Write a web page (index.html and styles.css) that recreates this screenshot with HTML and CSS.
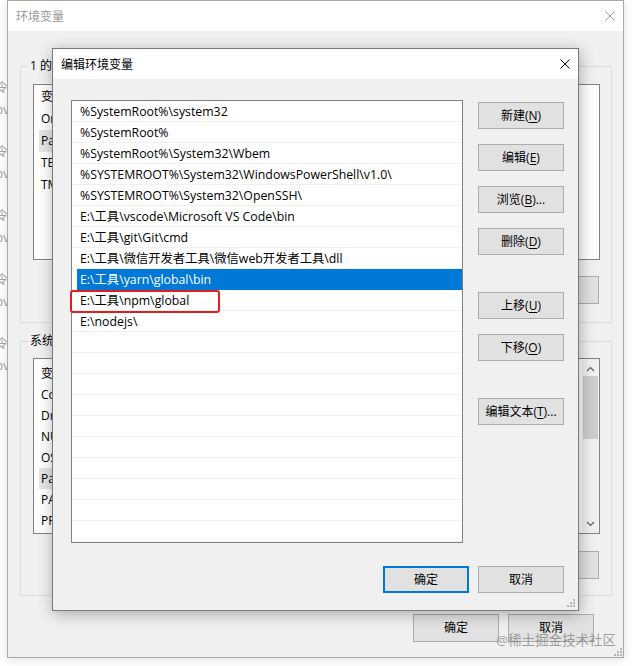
FILE: index.html
```html
<!DOCTYPE html>
<html lang="zh-CN">
<head>
<meta charset="utf-8">
<title>编辑环境变量</title>
<link rel="stylesheet" href="styles.css">
</head>
<body>
  <div class="peek">
    <div class="peek-item"><span>令</span><span>ov</span></div>
    <div class="peek-item"><span>令</span><span>ov</span></div>
    <div class="peek-item"><span>令</span><span>ov</span></div>
    <div class="peek-item"><span>令</span><span>ov</span></div>
    <div class="peek-item"><span>令</span><span>ov</span></div>
  </div>

  <div class="win back">
    <div class="titlebar">
      <span class="title">环境变量</span>
      <svg class="close" width="10" height="10" viewBox="0 0 10 10"><path d="M0.5 0.5L9.5 9.5M9.5 0.5L0.5 9.5" stroke="currentColor" stroke-width="1" fill="none"/></svg>
    </div>
    <div class="back-body">
      <fieldset class="group g1">
        <legend>1 的用户变量(U)</legend>
        <div class="blist l1">
          <div class="brow">变量</div>
          <div class="brow">OneDrive</div>
          <div class="brow sel">Path</div>
          <div class="brow">TEMP</div>
          <div class="brow">TMP</div>
        </div>
        <div class="gbtns"><button class="btn bbtn">删除(D)</button></div>
      </fieldset>
      <fieldset class="group g2">
        <legend>系统变量(S)</legend>
        <div class="blist l2">
          <div class="brow">变量</div>
          <div class="brow">ComSpec</div>
          <div class="brow">DriverData</div>
          <div class="brow">NUMBER_OF_PROCESSORS</div>
          <div class="brow">OS</div>
          <div class="brow sel">Path</div>
          <div class="brow">PATHEXT</div>
          <div class="brow">PROCESSOR_ARCHITECTURE</div>
          <div class="vscroll">
            <svg class="arrow" width="9" height="6" viewBox="0 0 9 6"><path d="M1 5L4.5 1.5L8 5" stroke="#606060" stroke-width="1.2" fill="none"/></svg>
            <div class="thumb"></div>
            <div class="track"></div>
            <svg class="arrow" width="9" height="6" viewBox="0 0 9 6"><path d="M1 1L4.5 4.5L8 1" stroke="#606060" stroke-width="1.2" fill="none"/></svg>
          </div>
        </div>
        <div class="gbtns"><button class="btn bbtn">删除(L)</button></div>
      </fieldset>
      <div class="back-foot">
        <button class="btn bbtn">确定</button>
        <button class="btn bbtn">取消</button>
      </div>
    </div>
    <svg class="grip back-grip" width="9" height="9" viewBox="0 0 9 9"><g fill="#b5b5b5"><rect x="7" y="1" width="2" height="2"/><rect x="4" y="4" width="2" height="2"/><rect x="7" y="4" width="2" height="2"/><rect x="1" y="7" width="2" height="2"/><rect x="4" y="7" width="2" height="2"/><rect x="7" y="7" width="2" height="2"/></g></svg>
  </div>

  <div class="win front">
    <div class="titlebar">
      <span class="title">编辑环境变量</span>
      <svg class="close" width="10" height="10" viewBox="0 0 10 10"><path d="M0.5 0.5L9.5 9.5M9.5 0.5L0.5 9.5" stroke="currentColor" stroke-width="1" fill="none"/></svg>
    </div>
    <div class="front-body">
      <div class="plist">
        <div class="prow">%SystemRoot%\system32</div>
        <div class="prow">%SystemRoot%</div>
        <div class="prow">%SystemRoot%\System32\Wbem</div>
        <div class="prow">%SYSTEMROOT%\System32\WindowsPowerShell\v1.0\</div>
        <div class="prow">%SYSTEMROOT%\System32\OpenSSH\</div>
        <div class="prow">E:\工具\vscode\Microsoft VS Code\bin</div>
        <div class="prow">E:\工具\git\Git\cmd</div>
        <div class="prow">E:\工具\微信开发者工具\微信web开发者工具\dll</div>
        <div class="prow selected">E:\工具\yarn\global\bin</div>
        <div class="prow">E:\工具\npm\global</div>
        <div class="prow">E:\nodejs\</div>
        <div class="mark"></div>
      </div>
      <div class="side">
        <button class="btn">新建(<u>N</u>)</button>
        <button class="btn">编辑(<u>E</u>)</button>
        <button class="btn">浏览(<u>B</u>)...</button>
        <button class="btn">删除(<u>D</u>)</button>
        <button class="btn spaced">上移(<u>U</u>)</button>
        <button class="btn">下移(<u>O</u>)</button>
        <button class="btn spaced">编辑文本(<u>T</u>)...</button>
      </div>
      <div class="front-foot">
        <button class="btn default">确定</button>
        <button class="btn">取消</button>
      </div>
    </div>
    <svg class="grip front-grip" width="9" height="9" viewBox="0 0 9 9"><g fill="#b5b5b5"><rect x="7" y="1" width="2" height="2"/><rect x="4" y="4" width="2" height="2"/><rect x="7" y="4" width="2" height="2"/><rect x="1" y="7" width="2" height="2"/><rect x="4" y="7" width="2" height="2"/><rect x="7" y="7" width="2" height="2"/></g></svg>
  </div>

  <div class="watermark">@稀土掘金技术社区</div>
</body>
</html>
```

FILE: styles.css
```css
* { box-sizing: border-box; }
html, body { margin: 0; padding: 0; }
body {
  width: 632px;
  height: 666px;
  overflow: hidden;
  position: relative;
  background: #fff;
  font-family: "Open Sans", "Noto Sans CJK SC", sans-serif;
  font-size: 12px;
  color: #000;
}

/* fragments of desktop items peeking at the left edge */
.peek {
  width: 7px;
  height: 666px;
  overflow: hidden;
  display: flex;
  flex-direction: column;
  padding-top: 77px;
  color: #a0a0a0;
}
.peek-item {
  height: 64px;
  display: flex;
  flex-direction: column;
  margin-left: -4px;
  line-height: 22px;
  white-space: nowrap;
}

/* windows */
.win {
  position: absolute;
  background: #f0f0f0;
  display: flex;
  flex-direction: column;
}
.titlebar {
  flex: none;
  background: #fff;
  display: flex;
  align-items: center;
  justify-content: space-between;
  padding: 0 8px;
}
.close { display: block; }

.back {
  left: 7px;
  top: 0;
  width: 617px;
  height: 658px;
  border: 1px solid #a9a9a9;
  box-shadow: 0 2px 10px rgba(0, 0, 0, 0.12);
}
.back .titlebar {
  height: 30px;
  color: #9a9a9a;
}
.back-body {
  flex: 1;
  display: flex;
  flex-direction: column;
  padding: 27px 11px 0 12px;
}
.group {
  margin: 0;
  min-width: 0;
  border: 1px solid #dcdcdc;
  display: flex;
  flex-direction: column;
}
.group legend {
  padding: 0 2px;
  margin-left: -5px;
  line-height: 16px;
}
.g1 { height: 265px; padding: 10px 11px 0 12px; }
.g2 { height: 263px; padding: 9px 11px 0 12px; margin-top: 10px; }

.blist {
  position: relative;
  height: 176px;
  background: #fff;
  border: 1px solid #828282;
  flex: none;
  overflow: hidden;
}
.l1 { padding-top: 1px; }
.l1 .brow { height: 22px; line-height: 22px; }
.l2 { padding-top: 4px; }
.l2 .brow { height: 21px; line-height: 21px; }
.brow {
  width: 160px;
  margin-left: 5px;
  padding-left: 2px;
  white-space: nowrap;
}
.brow.sel { background: #e5e5e5; }

.vscroll {
  position: absolute;
  right: 0;
  top: 0;
  bottom: 0;
  width: 17px;
  background: #f0f0f0;
  display: flex;
  flex-direction: column;
  align-items: center;
  padding: 7px 0 6px;
}
.thumb {
  width: 15px;
  height: 63px;
  margin-top: 4px;
  background: #cdcdcd;
}
.track { flex: 1; }

.gbtns {
  display: flex;
  justify-content: flex-end;
  padding-right: 1px;
}
.g1 .gbtns { margin-top: 16px; }
.g2 .gbtns { margin-top: 17px; }

.back-foot {
  display: flex;
  justify-content: flex-end;
  gap: 9px;
  margin-top: 18px;
  padding-right: 18px;
}

.btn {
  width: 86px;
  height: 27px;
  padding: 0;
  background: #e1e1e1;
  border: 1px solid #adadad;
  font: inherit;
  color: #000;
  line-height: 1;
}
.btn u { text-underline-offset: 2px; }
.bbtn { height: 28px; }

.front {
  left: 52px;
  top: 48px;
  width: 527px;
  height: 563px;
  border: 1px solid #7a7a7a;
  box-shadow: 1px 3px 14px rgba(0, 0, 0, 0.3);
}
.front .titlebar { height: 30px; }
.front-body {
  flex: 1;
  display: grid;
  grid-template-columns: 392px 86px;
  grid-template-rows: 443px 27px;
  column-gap: 15px;
  row-gap: 23px;
  padding: 21px 14px 17px 18px;
}
.plist {
  position: relative;
  border: 1px solid #828282;
  background-color: #fff;
  background-image: repeating-linear-gradient(to bottom, transparent 0 20px, #f0f0f0 20px 21px);
}
.prow {
  height: 21px;
  line-height: 21px;
  margin-left: 5px;
  padding-left: 3px;
  font-size: 12.3px;
  white-space: nowrap;
}
.prow.selected {
  background: #0078d7;
  color: #fff;
}
.mark {
  position: absolute;
  left: -2px;
  top: 189px;
  width: 150px;
  height: 23px;
  border: 2px solid #e0201e;
  border-radius: 3px;
}
.side {
  display: flex;
  flex-direction: column;
  gap: 15px;
  padding-top: 2px;
}
.side .spaced { margin-top: 22px; }
.front-foot {
  grid-column: 1 / -1;
  display: flex;
  justify-content: flex-end;
  gap: 9px;
}
.btn.default { border: 2px solid #0078d7; }

.grip { position: absolute; }
.front-grip { right: 3px; bottom: 3px; }
.back-grip { right: 1px; bottom: 1px; }

.watermark {
  position: absolute;
  left: 496px;
  top: 630px;
  font-size: 13.5px;
  line-height: 20px;
  color: rgba(130, 130, 130, 0.75);
  white-space: nowrap;
}
```
